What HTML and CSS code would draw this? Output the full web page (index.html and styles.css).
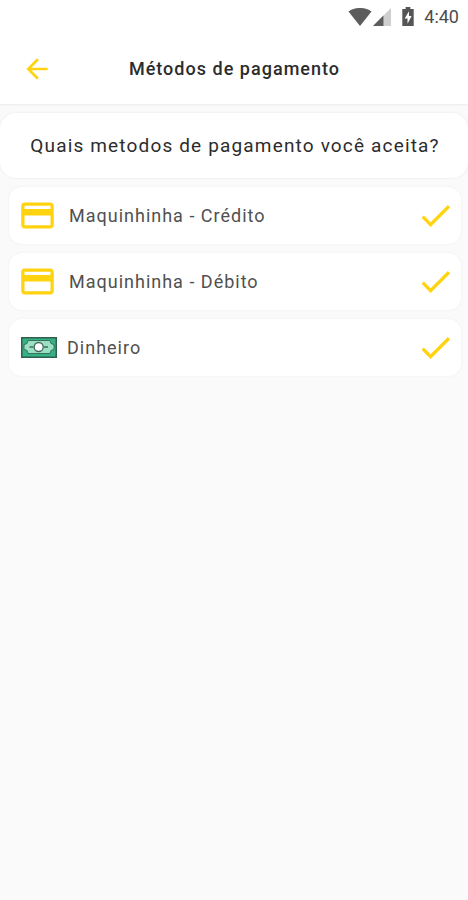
FILE: index.html
```html
<!DOCTYPE html>
<html lang="pt-BR">
<head>
<meta charset="UTF-8">
<meta name="viewport" content="width=device-width, initial-scale=1.0">
<title>Métodos de pagamento</title>
<link rel="stylesheet" href="styles.css">
</head>
<body>
    <header class="header">
        <div class="status-bar">
            <svg class="wifi" width="24" height="18" viewBox="0 0 24 18"><path d="M12 18L0.500 3.500C7-1.200 17-1.200 23.500 3.500z" fill="#5c5c5c"/></svg>
            <svg class="signal" width="18" height="18" viewBox="0 0 19 19"><path d="M0 19L19 0v19z" fill="#cfcfcf"/><path d="M0 19L11 8v11z" fill="#5c5c5c"/></svg>
            <svg class="battery" width="12" height="19" viewBox="0 0 12 20"><path d="M3.500 0h5v2H12v18H0V2h3.500z" fill="#555"/><path d="M7 4.500L2.500 12H5.500v5.500L9.800 9.500H7z" fill="#fff"/></svg>
            <span class="clock">4:40</span>
        </div>
        <div class="title-bar">
            <svg class="back" width="32" height="32" viewBox="0 0 24 24"><path d="M20 11H7.830l5.590-5.590L12 4l-8 8 8 8 1.410-1.410L7.830 13H20v-2z" fill="#ffd310"/></svg>
            <h1>Métodos de pagamento</h1>
        </div>
    </header>

    <main>
        <h2 class="question">Quais metodos de pagamento você aceita?</h2>
        <ul class="methods">
            <li class="method">
                <svg class="icon" width="39" height="39" viewBox="0 0 24 24"><path d="M20 4H4c-1.110 0-1.990.890-1.990 2L2 18c0 1.110.890 2 2 2h16c1.110 0 2-.890 2-2V6c0-1.110-.890-2-2-2zm0 14H4v-6h16v6zm0-10H4V6h16v2z" fill="#ffd310"/></svg>
                <span class="name">Maquinhinha - Crédito</span>
                <svg class="check" width="39" height="39" viewBox="0 0 24 24"><path d="M9 16.170L4.830 12l-1.420 1.410L9 19 21 7l-1.410-1.410z" fill="#ffd310"/></svg>
            </li>
            <li class="method">
                <svg class="icon" width="39" height="39" viewBox="0 0 24 24"><path d="M20 4H4c-1.110 0-1.990.890-1.990 2L2 18c0 1.110.890 2 2 2h16c1.110 0 2-.890 2-2V6c0-1.110-.890-2-2-2zm0 14H4v-6h16v6zm0-10H4V6h16v2z" fill="#ffd310"/></svg>
                <span class="name">Maquinhinha - Débito</span>
                <svg class="check" width="39" height="39" viewBox="0 0 24 24"><path d="M9 16.170L4.830 12l-1.420 1.410L9 19 21 7l-1.410-1.410z" fill="#ffd310"/></svg>
            </li>
            <li class="method cash">
                <svg class="icon" width="36" height="21" viewBox="0 0 36 21">
                    <rect x="0.750" y="0.750" width="34.500" height="19.500" fill="#35b184" stroke="#315f50" stroke-width="1.500"/>
                    <path d="M7 3.500h22a4 4 0 0 0 4 4v5a4 4 0 0 0-4 4H7a4 4 0 0 0-4-4v-5a4 4 0 0 0 4-4z" fill="#9ce0c3" stroke="#38705f"/>
                    <path d="M8.500 10h4M23 10h4" stroke="#38705f" stroke-width="1.500"/>
                    <circle cx="17.700" cy="10" r="4.500" fill="#fff" stroke="#43675b" stroke-width="1.300"/>
                </svg>
                <span class="name">Dinheiro</span>
                <svg class="check" width="39" height="39" viewBox="0 0 24 24"><path d="M9 16.170L4.830 12l-1.420 1.410L9 19 21 7l-1.410-1.410z" fill="#ffd310"/></svg>
            </li>
        </ul>
    </main>
</body>
</html>
```

FILE: styles.css
```css
* {
    box-sizing: border-box;
}

body {
    margin: 0;
    min-height: 100vh;
    background: #fafafa;
    font-family: Roboto, "Liberation Sans", sans-serif;
    color: #2c2c2c;
}

svg {
    display: block;
    flex: none;
}

.header {
    height: 104px;
    background: #fff;
    box-shadow: 0 0 3px rgba(0, 0, 0, 0.12);
}

.status-bar {
    display: flex;
    justify-content: flex-end;
    align-items: center;
    height: 33px;
    padding-right: 9px;
}

.signal {
    margin-left: 1px;
}

.battery {
    margin-left: 11px;
}

.clock {
    margin-left: 10px;
    font-size: 18px;
    font-weight: 400;
    color: #4c4c4c;
}

.title-bar {
    display: grid;
    grid-template-columns: 32px 1fr 32px;
    align-items: center;
    height: 71px;
    padding: 0 20px 0 21px;
}

h1 {
    margin: 0;
    text-align: center;
    font-size: 18px;
    font-weight: 500;
    letter-spacing: 1.020px;
}

.question {
    margin: 9px 0 0;
    height: 65px;
    line-height: 65px;
    padding-left: 2px;
    border-radius: 16px;
    background: #fff;
    box-shadow: 0 0 3px rgba(0, 0, 0, 0.08);
    text-align: center;
    font-size: 19px;
    font-weight: 400;
    letter-spacing: 1.160px;
}

.methods {
    display: flex;
    flex-direction: column;
    gap: 9px;
    margin: 9px 7px 0 9px;
    padding: 0;
    list-style: none;
}

.method {
    display: flex;
    align-items: center;
    height: 57px;
    padding: 0 6px 0 9px;
    border-radius: 13px;
    background: #fff;
    box-shadow: 0 0 3px rgba(0, 0, 0, 0.05);
}

.name {
    flex: 1;
    margin-left: 12px;
    font-size: 18px;
    letter-spacing: 1px;
    color: #505050;
}

.cash {
    padding-left: 12px;
}

.cash .name {
    margin-left: 10px;
}
```
